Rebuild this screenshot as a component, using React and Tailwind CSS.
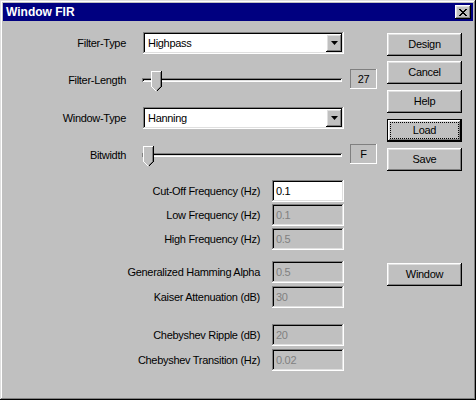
import React from "react";

const raised =
  "shadow-[inset_-1px_-1px_#000,inset_1px_1px_#fff,inset_-2px_-2px_#808080,inset_2px_2px_#dfdfdf]";
const sunken =
  "shadow-[inset_-1px_-1px_#fff,inset_1px_1px_#808080,inset_-2px_-2px_#dfdfdf,inset_2px_2px_#000]";
const thinSunken = "shadow-[inset_-1px_-1px_#fff,inset_1px_1px_#808080]";

function Thumb() {
  return (
    <svg width="11" height="21" viewBox="0 0 11 21" shapeRendering="crispEdges">
      <polygon points="0,0 11,0 11,16 5.5,21 0,16" fill="#c0c0c0" />
      <polyline points="0.5,16 0.5,0.5 10,0.5" fill="none" stroke="#fff" />
      <polyline points="0.5,15.5 5,20" fill="none" stroke="#fff" />
      <polyline points="10.5,0 10.5,15.5 5.5,20.5" fill="none" stroke="#000" />
      <polyline points="9.5,1 9.5,15.5 5.5,19.5" fill="none" stroke="#808080" />
    </svg>
  );
}

function Combo({ value }) {
  return (
    <div className={`flex h-[22px] w-[201px] items-stretch bg-white p-[2px] ${sunken}`}>
      <div className="flex flex-1 items-center pl-[3px] text-black">{value}</div>
      <div className={`flex w-[16px] items-center justify-center bg-[#c0c0c0] ${raised}`}>
        <svg width="7" height="4" viewBox="0 0 7 4">
          <polygon points="0,0 7,0 3.5,4" fill="#000" />
        </svg>
      </div>
    </div>
  );
}

function Slider({ pos, value }) {
  return (
    <>
      <div className="relative ml-[16px] h-[22px] w-[200px]">
        <div className="mt-[9px] h-[4px] w-full shadow-[inset_1px_1px_#808080,inset_-1px_-1px_#fff,inset_2px_2px_#000,inset_-2px_-2px_#dfdfdf]" />
        <div className="absolute top-[2px]" style={{ left: pos }}>
          <Thumb />
        </div>
      </div>
      <div
        className={`ml-[8px] flex h-[20px] w-[27px] items-center justify-center self-start ${thinSunken}`}
      >
        {value}
      </div>
    </>
  );
}

function TopRow({ label, children, className }) {
  return (
    <div className={`flex h-[22px] items-center ${className}`}>
      <div className="w-[123px] text-right">{label}</div>
      {children}
    </div>
  );
}

function EditRow({ label, value, enabled, className }) {
  return (
    <div className={`flex h-[22px] items-center ${className}`}>
      <div className="w-[257px] text-right">{label}</div>
      <div
        className={`ml-[12px] flex h-[22px] w-[72px] items-center pl-[4px] ${sunken} ${
          enabled ? "bg-white text-black" : "bg-[#c0c0c0] text-[#808080]"
        }`}
      >
        {value}
      </div>
    </div>
  );
}

function Button({ children, isDefault, className }) {
  if (isDefault) {
    return (
      <div className={`h-[23px] w-[75px] border border-black ${className}`}>
        <div className={`flex h-full w-full items-center justify-center p-[3px] ${raised}`}>
          <div className="flex h-full w-full items-center justify-center outline-1 outline-dotted outline-black">
            {children}
          </div>
        </div>
      </div>
    );
  }
  return (
    <div className={`flex h-[23px] w-[75px] items-center justify-center ${raised} ${className}`}>
      {children}
    </div>
  );
}

export default function App() {
  return (
    <div
      className={`flex h-[400px] w-[476px] flex-col bg-[#c0c0c0] p-[3px] font-['Liberation_Sans',Arial,sans-serif] text-[11px] tracking-[-0.3px] text-black shadow-[inset_-1px_-1px_#000,inset_1px_1px_#dfdfdf,inset_-2px_-2px_#808080,inset_2px_2px_#fff]`}
    >
      <div className="flex h-[18px] items-center justify-between bg-[#000080] pl-[3px] pr-[2px]">
        <span className="text-[12px] font-bold tracking-normal text-white">Window FIR</span>
        <div className={`flex h-[14px] w-[16px] items-center justify-center bg-[#c0c0c0] ${raised}`}>
          <svg width="8" height="7" viewBox="0 0 8 7" shapeRendering="crispEdges">
            <path
              d="M0 0h2v1h1v1h2V1h1V0h2v1H7v1H6v1H5v1h1v1h1v1h1v1H6V6H5V5H3v1H2v1H0V6h1V5h1V4h1V3H2V2H1V1H0z"
              fill="#000"
            />
          </svg>
        </div>
      </div>

      <div className="flex">
        <div className="flex w-[384px] flex-col">
          <TopRow label="Filter-Type" className="mt-[11px]">
            <div className="ml-[17px]">
              <Combo value="Highpass" />
            </div>
          </TopRow>
          <TopRow label="Filter-Length" className="mt-[15px]">
            <Slider pos={9} value="27" />
          </TopRow>
          <TopRow label="Window-Type" className="mt-[16px]">
            <div className="ml-[17px]">
              <Combo value="Hanning" />
            </div>
          </TopRow>
          <TopRow label="Bitwidth" className="mt-[15px]">
            <Slider pos={1} value="F" />
          </TopRow>

          <EditRow label="Cut-Off Frequency (Hz)" value="0.1" enabled className="mt-[14px]" />
          <EditRow label="Low Frequency (Hz)" value="0.1" className="mt-[2px]" />
          <EditRow label="High Frequency (Hz)" value="0.5" className="mt-[2px]" />
          <EditRow label="Generalized Hamming Alpha" value="0.5" className="mt-[11px]" />
          <EditRow label="Kaiser Attenuation (dB)" value="30" className="mt-[3px]" />
          <EditRow label="Chebyshev Ripple (dB)" value="20" className="mt-[16px]" />
          <EditRow label="Chebyshev Transition (Hz)" value="0.02" className="mt-[3px]" />
        </div>

        <div className="flex flex-col">
          <Button className="mt-[12px]">Design</Button>
          <Button className="mt-[5px]">Cancel</Button>
          <Button className="mt-[6px]">Help</Button>
          <Button isDefault className="mt-[6px]">
            Load
          </Button>
          <Button className="mt-[6px]">Save</Button>
          <Button className="mt-[92px]">Window</Button>
        </div>
      </div>
    </div>
  );
}
